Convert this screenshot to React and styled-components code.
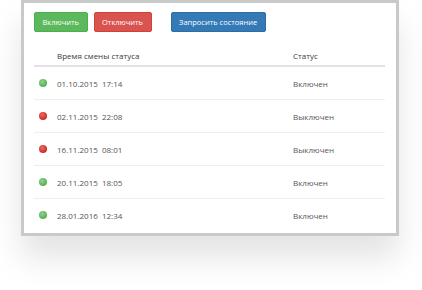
import React from 'react';
import styled, { createGlobalStyle } from 'styled-components';

const GlobalStyle = createGlobalStyle`
	body {
		margin: 0;
		background: #fff;
		font-family: 'Open Sans', 'Liberation Sans', sans-serif;
	}
`;

const Page = styled.div`
	width: 422px;
	height: 290px;
	overflow: hidden;
`;

const Frame = styled.div`
	box-sizing: border-box;
	width: 378px;
	margin-left: 21px;
	border: 3px solid #c9c9c9;
	background: #fff;
	padding: 9px 11px 1px 10px;
	box-shadow: 0 22px 30px rgba(0, 0, 0, 0.11);
`;

const Toolbar = styled.div`
	display: flex;
	gap: 6px;
`;

const colors = {
	green: ['#5cb85c', '#4cae4c'],
	red: ['#d9534f', '#d43f3a'],
	blue: ['#337ab7', '#2e6da4'],
};

const Button = styled.button`
	height: 20px;
	padding: 0 7.5px;
	border: 1px solid ${(props) => colors[props.color][1]};
	border-radius: 2px;
	background: ${(props) => colors[props.color][0]};
	color: #fff;
	font-family: 'Open Sans', 'Liberation Sans', sans-serif;
	font-size: 7.5px;
	line-height: 18px;
	margin-left: ${(props) => (props.spaced ? '13px' : '0')};
`;

const Table = styled.div`
	margin-top: 13px;
`;

const Row = styled.div`
	display: grid;
	grid-template-columns: 23px 236px 1fr;
	align-items: center;
	height: ${(props) => (props.head ? '20px' : '32px')};
	border-bottom: ${(props) => (props.head ? '2px solid #e2e2e2' : props.last ? 'none' : '1px solid #eeeeee')};
	padding-bottom: ${(props) => (props.last ? '1px' : '0')};
	font-size: 8px;
	color: ${(props) => (props.head ? '#3a3a3a' : '#555')};
`;

const Dot = styled.span`
	display: block;
	width: 8px;
	height: 8px;
	margin-left: 5px;
	border-radius: 50%;
	background: ${(props) =>
		props.on
			? 'radial-gradient(circle at 40% 35%, #8fd18e, #55b054 70%)'
			: 'radial-gradient(circle at 40% 35%, #ec6a64, #cc2b26 70%)'};
`;

const Cell = styled.span`
	white-space: pre;
`;

const rows = [
	{ date: '01.10.2015', time: '17:14', on: true },
	{ date: '02.11.2015', time: '22:08', on: false },
	{ date: '16.11.2015', time: '08:01', on: false },
	{ date: '20.11.2015', time: '18:05', on: true },
	{ date: '28.01.2016', time: '12:34', on: true },
];

const App = () => {
	return (
		<Page>
			<GlobalStyle />
			<Frame>
				<Toolbar>
					<Button color="green">Включить</Button>
					<Button color="red">Отключить</Button>
					<Button color="blue" spaced>
						Запросить состояние
					</Button>
				</Toolbar>
				<Table>
					<Row head>
						<span />
						<Cell>Время смены статуса</Cell>
						<Cell>Статус</Cell>
					</Row>
					{rows.map((r, i) => (
						<Row key={r.date} last={i === rows.length - 1}>
							<Dot on={r.on} />
							<Cell>{`${r.date}  ${r.time}`}</Cell>
							<Cell>{r.on ? 'Включен' : 'Выключен'}</Cell>
						</Row>
					))}
				</Table>
			</Frame>
		</Page>
	);
};

export default App;
